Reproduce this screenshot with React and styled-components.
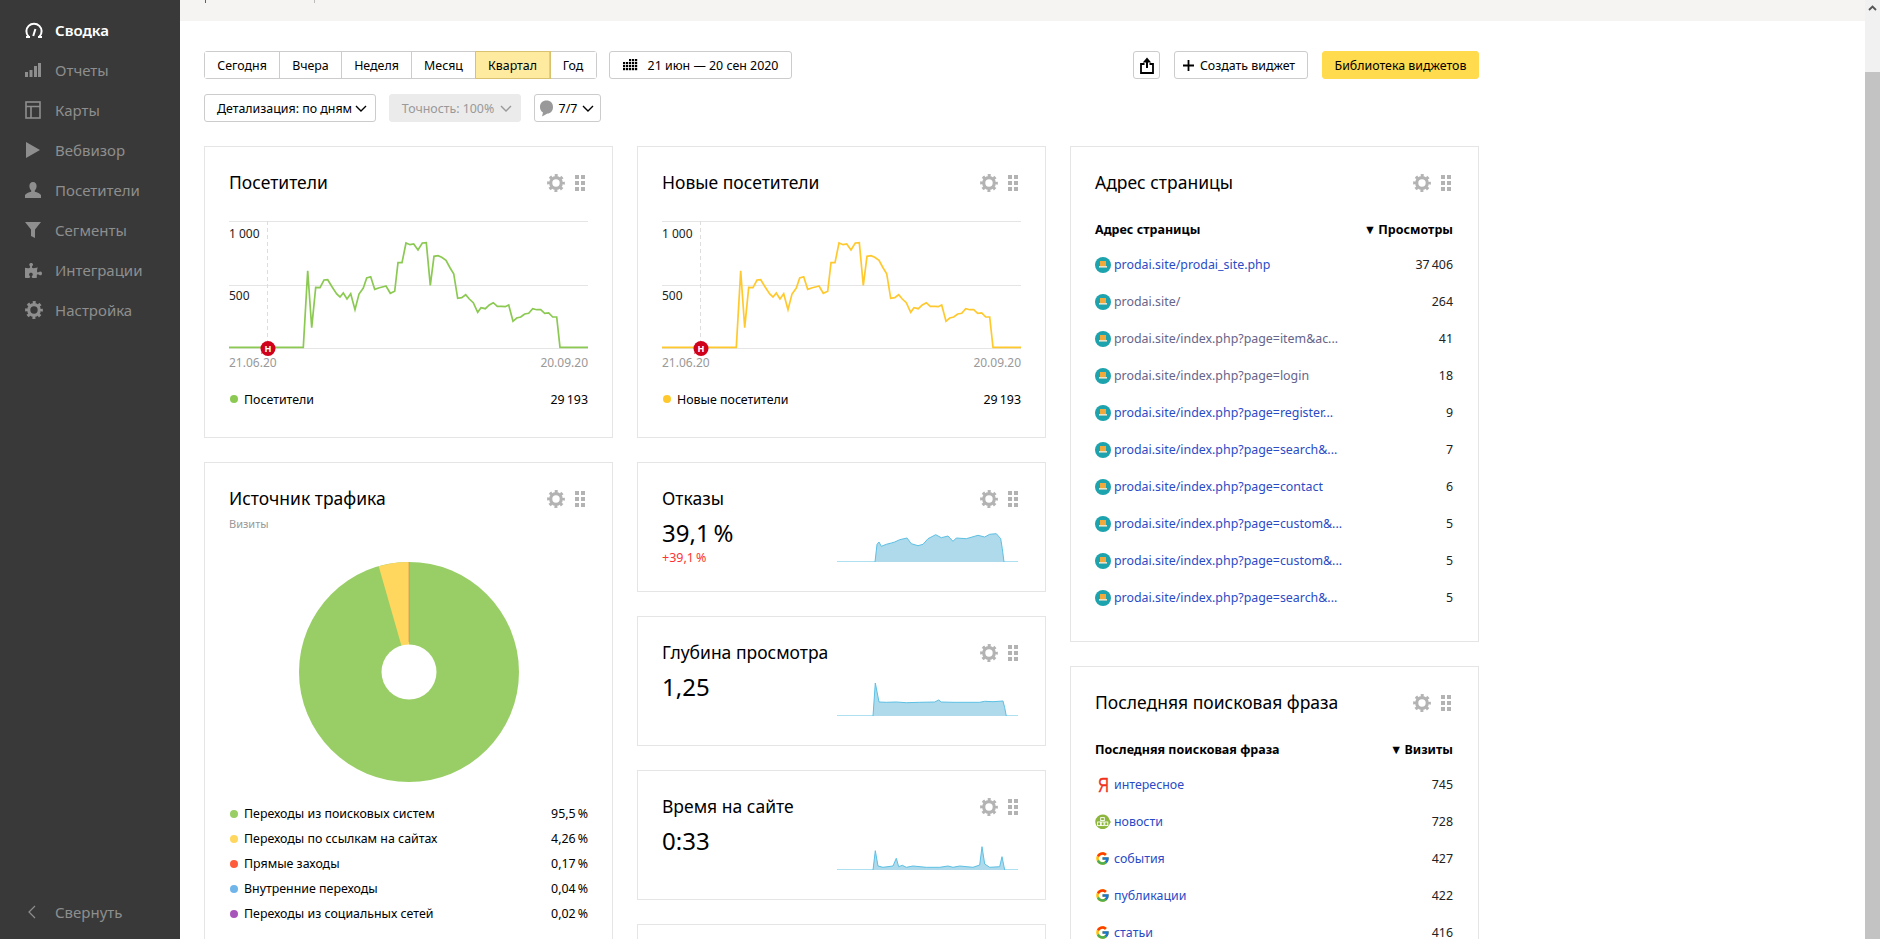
import React from "react";
import styled, { createGlobalStyle } from "styled-components";
import { FaPuzzlePiece } from "react-icons/fa";
import { FcGoogle } from "react-icons/fc";

const GlobalStyle = createGlobalStyle`
  html, body {
    margin: 0;
    height: 100%;
    overflow: hidden;
    background: #fff;
  }
  body {
    font-family: "Noto Sans", "Open Sans", "Liberation Sans", sans-serif;
    font-size: 12.4px;
    color: #000;
  }
  * { box-sizing: border-box; }
`;

const Page = styled.div`
  display: flex;
  width: 1880px;
  height: 939px;
  overflow: hidden;
`;

const Sidebar = styled.nav`
  width: 180px;
  flex-shrink: 0;
  background: #393939;
  display: flex;
  flex-direction: column;
  padding: 10px 0 7px;
`;

const NavItem = styled.div`
  height: 40px;
  display: flex;
  align-items: center;
  padding-left: 25px;
  font-size: 15px;
  font-weight: ${(p) => (p.$active ? 600 : 400)};
  color: ${(p) => (p.$active ? "#fff" : "#8e8e8e")};
`;

const NavIcon = styled.span`
  width: 30px;
  display: flex;
  align-items: center;
  color: ${(p) => (p.$active ? "#fff" : "#8e8e8e")};
`;

const Collapse = styled(NavItem)`
  margin-top: auto;
`;

const Main = styled.main`
  flex: 1;
  min-width: 0;
  overflow: hidden;
`;

const TopBar = styled.div`
  height: 21px;
  background: #f5f4f2;
  display: flex;
  align-items: flex-start;
  padding-left: 25px;
`;

const TopTick = styled.span`
  width: 1px;
  height: 3px;
  background: ${(p) => p.$color};
  margin-right: ${(p) => p.$gap}px;
`;

const Content = styled.div`
  padding: 30px 0 0 24px;
  width: 1299px;
`;

const ToolRow = styled.div`
  display: flex;
  justify-content: space-between;
  margin-bottom: ${(p) => p.$mb}px;
`;

const Group = styled.div`
  display: flex;
  gap: ${(p) => p.$gap}px;
`;

const Tabs = styled.div`
  display: flex;
  height: 28px;
  border: 1px solid #ccc;
  border-radius: 3px;
`;

const Tab = styled.div`
  width: ${(p) => p.$w}px;
  display: flex;
  align-items: center;
  justify-content: center;
  background: ${(p) => (p.$active ? "#ffeba0" : "#fff")};
  border-right: 1px solid #ccc;
  box-shadow: ${(p) => (p.$active ? "0 0 0 1px #d8c16f" : "none")};
  position: ${(p) => (p.$active ? "relative" : "static")};
  &:last-child { border-right: 0; }
`;

const Button = styled.div`
  height: 28px;
  width: ${(p) => p.$w}px;
  display: flex;
  align-items: center;
  justify-content: center;
  gap: ${(p) => p.$gap || 0}px;
  padding: 0 ${(p) => p.$pr || 0}px 0 ${(p) => p.$pl || 0}px;
  border: 1px solid #ccc;
  border-radius: 3px;
  background: #fff;
  white-space: nowrap;
`;

const MutedButton = styled(Button)`
  background: #ebebeb;
  border-color: #ebebeb;
  color: #999;
`;

const YellowButton = styled(Button)`
  background: #ffdb4d;
  border-color: #ffdb4d;
`;

const Columns = styled.div`
  display: grid;
  grid-template-columns: repeat(3, 409px);
  column-gap: 24px;
  align-items: start;
`;

const Column = styled.div`
  display: flex;
  flex-direction: column;
  gap: 24px;
`;

const Card = styled.section`
  height: ${(p) => p.$h}px;
  border: 1px solid #e5e5e5;
  padding: 23px 24px 0;
  flex-shrink: 0;
`;

const CardHead = styled.div`
  display: flex;
  align-items: center;
  justify-content: space-between;
  height: 26px;
  padding-right: 3px;
`;

const CardTitle = styled.h3`
  margin: 0;
  padding-bottom: 2px;
  font-size: 17.5px;
  font-weight: 400;
  line-height: 24px;
  white-space: nowrap;
`;

const CardTools = styled.div`
  display: flex;
  align-items: center;
  gap: 10px;
  color: #b3b3b3;
`;

const DotGrip = styled.svg`
  display: block;
`;

const Chart = styled.svg`
  display: block;
  margin-top: 25px;
  overflow: visible;
`;

const Dates = styled.div`
  display: flex;
  justify-content: space-between;
  font-size: 12px;
  line-height: 16px;
  color: #999;
  position: relative;
`;

const LegendRow = styled.div`
  display: flex;
  align-items: center;
  height: ${(p) => p.$h || 25}px;
  margin-top: ${(p) => p.$mt || 0}px;
`;

const LegendDot = styled.span`
  width: 8px;
  height: 8px;
  border-radius: 50%;
  margin: 0 6px 0 1px;
  background: ${(p) => p.$color};
  flex-shrink: 0;
`;

const LegendValue = styled.span`
  margin-left: auto;
`;

const Subtitle = styled.div`
  margin-top: 5px;
  font-size: 11px;
  line-height: 14px;
  color: #999;
`;

const Pie = styled.svg`
  display: block;
  margin: 31px auto 19px;
`;

const MetricBody = styled.div`
  display: flex;
  justify-content: space-between;
  padding-right: 3px;
`;

const MetricValue = styled.div`
  margin-top: 6px;
  font-size: 24px;
  line-height: 30px;
`;

const MetricDelta = styled.div`
  margin-top: 2px;
  font-size: 12.5px;
  line-height: 16px;
  color: #f33;
`;

const Spark = styled.svg`
  display: block;
  margin-top: 15px;
`;

const TableHead = styled.div`
  display: flex;
  justify-content: space-between;
  margin: 25px 0 7px;
  padding-right: 1px;
  font-weight: 700;
  font-size: 12.5px;
  line-height: 18px;
`;

const TableRow = styled.div`
  display: flex;
  align-items: center;
  height: 37px;
  padding-right: 1px;
`;

const RowIcon = styled.span`
  width: 19px;
  height: 16px;
  display: flex;
  align-items: center;
  flex-shrink: 0;
`;

const RowLink = styled.span`
  color: ${(p) => (p.$visited ? "#66648a" : "#2a4bc6")};
  white-space: nowrap;
`;

const RowValue = styled.span`
  margin-left: auto;
  color: #222;
`;

const YandexMark = styled.span`
  font-family: "Liberation Sans", sans-serif;
  font-size: 21px;
  line-height: 16px;
  color: #f0301f;
  -webkit-text-stroke: 0.3px #f0301f;
  margin-left: 3px;
  transform: scaleX(0.72);
  transform-origin: left center;
`;

const Scrollbar = styled.div`
  width: 15px;
  flex-shrink: 0;
  background: #f1f1f1;
  display: flex;
  flex-direction: column;
`;

const ScrollArrow = styled.div`
  height: 72px;
  padding-top: 5px;
  display: flex;
  justify-content: center;
  align-items: flex-start;
`;

const ScrollThumb = styled.div`
  flex: 1;
  background: #c3c3c3;
`;

const GaugeIcon = () => (
  <svg width="18" height="16" viewBox="0 0 18 16" fill="none" stroke="currentColor">
    <path d="M3.5 14.5A7.6 7.6 0 1 1 14.5 14.5" strokeWidth="2" />
    <path d="M1 15h4M13 15h4" strokeWidth="2" />
    <path d="M8.2 14l2.2-7" strokeWidth="2" />
  </svg>
);

const BarsIcon = () => (
  <svg width="16" height="16" viewBox="0 0 16 16" fill="currentColor">
    <rect x="0" y="10" width="3" height="5" />
    <rect x="4.5" y="8" width="3" height="7" />
    <rect x="9" y="4" width="3" height="11" />
    <rect x="13" y="1" width="3" height="14" />
  </svg>
);

const MapIcon = () => (
  <svg width="16" height="18" viewBox="0 0 16 18" fill="none" stroke="currentColor" strokeWidth="1.6">
    <rect x="1" y="1" width="14" height="16" />
    <path d="M1 5.5h14M6 5.5V17" />
  </svg>
);

const PlayIcon = () => (
  <svg width="16" height="16" viewBox="0 0 16 16" fill="currentColor">
    <path d="M1 0l14 8L1 16z" />
  </svg>
);

const UserIcon = () => (
  <svg width="16" height="16" viewBox="0 0 16 16" fill="currentColor">
    <path d="M8 0c2.4 0 3.6 1.700 3.600 4 0 2-1 3.600-1.800 4.600v1.200c2.600.8 5.200 1.600 6.200 3.200v3H0v-3c1-1.600 3.600-2.400 6.200-3.200V8.600C5.400 7.600 4.400 6 4.400 4 4.400 1.700 5.600 0 8 0z" />
  </svg>
);

const FunnelIcon = () => (
  <svg width="16" height="16" viewBox="0 0 16 16" fill="currentColor">
    <path d="M0 0h16l-6 7.500V16l-4-2V7.500z" />
  </svg>
);

// ring plus a dashed ring for the teeth, the hole stays wide like in the original
const GearIcon = () => (
  <svg width="18" height="18" viewBox="0 0 18 18" fill="none" stroke="currentColor">
    <circle cx="9" cy="9" r="5.300" strokeWidth="3.200" />
    <circle cx="9" cy="9" r="7.400" strokeWidth="3" strokeDasharray="2.900 2.912" strokeDashoffset="1.450" />
  </svg>
);

const Chevron = ({ color = "#000" }) => (
  <svg width="12" height="7" viewBox="0 0 12 7" fill="none" stroke={color} strokeWidth="1.4">
    <path d="M1 1l5 5 5-5" />
  </svg>
);

const CalendarIcon = () => (
  <svg width="15" height="12" viewBox="0 0 15 12" fill="#000">
    {[0, 1, 2, 3].flatMap((row) =>
      [0, 1, 2, 3, 4].map((col) =>
        row === 0 && col < 2 ? null : (
          <rect key={`${row}-${col}`} x={col * 3} y={row * 3} width="2.200" height="2.200" />
        )
      )
    )}
  </svg>
);

const CommentIcon = () => (
  <svg width="15" height="17" viewBox="0 0 15 17" fill="#999">
    <path d="M7.500 0.500C11.500 0.500 14 3 14 7c0 4-2.500 6.500-5.500 6.500L3 16.500l1-4C1.800 11.200 1 9.300 1 7 1 3 3.500 0.500 7.500 0.500z" />
  </svg>
);

const ShareIcon = () => (
  <svg width="14" height="17" viewBox="0 0 14 17" fill="none" stroke="#000">
    <path d="M7 11V2" strokeWidth="2" />
    <path d="M2.800 5.500L7 0.600l4.200 4.900z" fill="#000" strokeWidth="0" />
    <path d="M4.500 7H1v9h12V7H9.500" strokeWidth="1.800" />
  </svg>
);

const PlusIcon = () => (
  <svg width="11" height="11" viewBox="0 0 11 11" stroke="#000" strokeWidth="1.800">
    <path d="M5.500 0v11M0 5.500h11" />
  </svg>
);

const Grip = () => (
  <DotGrip width="10" height="16" viewBox="0 0 10 16" fill="#b3b3b3">
    {[0, 6, 12].flatMap((y) =>
      [0, 6].map((x) => <rect key={`${x}-${y}`} x={x} y={y} width="4" height="4" />)
    )}
  </DotGrip>
);

const Favicon = () => (
  <svg width="16" height="16" viewBox="0 0 16 16">
    <circle cx="8" cy="8" r="8" fill="#1da3ad" />
    <rect x="5" y="4" width="6" height="5" fill="#f2a93b" />
    <rect x="4" y="9" width="8" height="1.600" fill="#e9e2c8" />
  </svg>
);

const NewsIcon = () => (
  <svg width="16" height="16" viewBox="0 0 16 16" fill="none">
    <path d="M7.500 0.500a7.300 7.300 0 0 1 6.900 5l1.400 2.400-1.400 2.500a7.300 7.300 0 1 1-6.900-9.900z" fill="#8cb63c" />
    <rect x="5.700" y="3.600" width="3.600" height="3" stroke="#fff" strokeWidth="0.900" />
    <rect x="2.600" y="8" width="3" height="3.600" stroke="#fff" strokeWidth="0.900" />
    <rect x="6.200" y="8" width="2.800" height="3.600" stroke="#fff" strokeWidth="0.900" />
    <rect x="9.800" y="8" width="3" height="3.600" stroke="#fff" strokeWidth="0.900" />
  </svg>
);

const CardHeader = ({ title }) => (
  <CardHead>
    <CardTitle>{title}</CardTitle>
    <CardTools>
      <GearIcon />
      <Grip />
    </CardTools>
  </CardHead>
);

// traced from the visits graph, in 3x crop coordinates
const linePoints = [
  [27, 442], [250, 442], [263, 212], [275, 383], [287, 262], [300, 263], [312, 240], [323, 239],
  [337, 262], [350, 282], [360, 291], [370, 279], [381, 297], [392, 281], [405, 329], [417, 282],
  [430, 264], [440, 234], [452, 230], [464, 268], [478, 263], [490, 260], [498, 258], [511, 280],
  [524, 274], [534, 188], [546, 188], [558, 129], [570, 134], [581, 132], [594, 150], [607, 129],
  [619, 128], [631, 256], [642, 169], [654, 167], [665, 172], [678, 181], [690, 203], [701, 221],
  [713, 295], [725, 293], [737, 284], [748, 297], [760, 308], [773, 337], [783, 323], [796, 326],
  [808, 315], [820, 308], [832, 319], [845, 319], [856, 320], [866, 315], [879, 364], [890, 354],
  [902, 351], [914, 342], [926, 340], [938, 326], [950, 329], [962, 329], [974, 340], [986, 339],
  [998, 351], [1010, 351], [1020, 442], [1104, 442],
]
  .map(([x, y]) => `${(x / 3 - 9).toFixed(1)},${(y / 3 - 21).toFixed(1)}`)
  .join(" ");

const LineChart = ({ color }) => (
  <Chart width="359" height="134" viewBox="0 0 359 134">
    <path d="M0 0.500H359M0 64.500H359M0 127.500H359" stroke="#e5e5e5" />
    <path d="M38.500 0V120" stroke="#ddd" strokeDasharray="4 3" />
    <text x="0" y="17" fontSize="12" fill="#222">1 000</text>
    <text x="0" y="79" fontSize="12" fill="#222">500</text>
    <polyline points={linePoints} fill="none" stroke={color} strokeWidth="1.700" />
    <path d="M32 133l1.500-4h5z" fill="#d0021b" />
    <circle cx="39" cy="127.500" r="7.500" fill="#d0021b" />
    <text x="39" y="131" fontSize="9" fontWeight="700" fill="#fff" textAnchor="middle">Н</text>
  </Chart>
);

const sparkFill = (heights) => {
  const pts = heights.map(([x, h]) => `${((x - 652) / 3).toFixed(1)},${(35 - h / 3).toFixed(1)}`);
  return pts.join(" ");
};

const Sparkline = ({ heights }) => {
  const pts = sparkFill(heights);
  return (
    <Spark width="181" height="35" viewBox="0 0 181 35">
      <polygon points={pts} fill="#aedaeb" />
      <polyline points={pts} fill="none" stroke="#5cc0e4" strokeWidth="1" />
    </Spark>
  );
};

const bounceHeights = [
  [652, 0], [766, 0], [772, 53], [778, 60], [785, 47], [800, 53], [815, 57], [825, 60], [840, 67],
  [862, 72], [875, 55], [895, 49], [910, 53], [925, 70], [948, 82], [965, 73], [985, 78], [1000, 62],
  [1010, 72], [1040, 70], [1075, 80], [1095, 75], [1110, 83], [1130, 85], [1143, 70], [1148, 40],
  [1153, 0], [1195, 0],
];

const depthHeights = [
  [652, 0], [760, 0], [767, 99], [778, 42], [800, 41], [830, 42], [860, 40], [900, 41], [945, 42],
  [957, 48], [965, 42], [1000, 41], [1060, 41], [1080, 41], [1095, 44], [1120, 43], [1150, 45],
  [1155, 25], [1160, 0], [1195, 0],
];

const timeHeights = [
  [652, 0], [760, 0], [767, 58], [775, 12], [790, 8], [820, 12], [830, 35], [837, 10], [848, 14],
  [860, 8], [880, 12], [920, 8], [960, 8], [985, 12], [1000, 8], [1020, 12], [1060, 8], [1080, 15],
  [1087, 70], [1095, 18], [1110, 8], [1140, 10], [1147, 40], [1155, 0], [1195, 0],
];

const navItems = [
  { label: "Сводка", icon: <GaugeIcon />, active: true },
  { label: "Отчеты", icon: <BarsIcon /> },
  { label: "Карты", icon: <MapIcon /> },
  { label: "Вебвизор", icon: <PlayIcon /> },
  { label: "Посетители", icon: <UserIcon /> },
  { label: "Сегменты", icon: <FunnelIcon /> },
  { label: "Интеграции", icon: <FaPuzzlePiece size={17} /> },
  { label: "Настройка", icon: <GearIcon /> },
];

const tabs = [
  ["Сегодня", 75],
  ["Вчера", 62],
  ["Неделя", 70],
  ["Месяц", 64],
  ["Квартал", 74],
  ["Год", 46],
];

const sources = [
  ["Переходы из поисковых систем", "#98ce64", "95,5\u2009%"],
  ["Переходы по ссылкам на сайтах", "#ffd75e", "4,26\u2009%"],
  ["Прямые заходы", "#ff5c3c", "0,17\u2009%"],
  ["Внутренние переходы", "#6fb5e9", "0,04\u2009%"],
  ["Переходы из социальных сетей", "#a855bb", "0,02\u2009%"],
];

const pages = [
  ["prodai.site/prodai_site.php", "37\u2009406"],
  ["prodai.site/", "264", true],
  ["prodai.site/index.php?page=item&ac...", "41", true],
  ["prodai.site/index.php?page=login", "18", true],
  ["prodai.site/index.php?page=register...", "9"],
  ["prodai.site/index.php?page=search&...", "7"],
  ["prodai.site/index.php?page=contact", "6"],
  ["prodai.site/index.php?page=custom&...", "5"],
  ["prodai.site/index.php?page=custom&...", "5"],
  ["prodai.site/index.php?page=search&...", "5"],
];

const phrases = [
  ["интересное", "745", <YandexMark key="y">Я</YandexMark>],
  ["новости", "728", <NewsIcon key="n" />],
  ["события", "427", <FcGoogle key="g1" size={15} />],
  ["публикации", "422", <FcGoogle key="g2" size={15} />],
  ["статьи", "416", <FcGoogle key="g3" size={15} />],
];

export default function App() {
  return (
    <Page>
      <GlobalStyle />
      <Sidebar>
        {navItems.map((item) => (
          <NavItem key={item.label} $active={item.active}>
            <NavIcon $active={item.active}>{item.icon}</NavIcon>
            {item.label}
          </NavItem>
        ))}
        <Collapse>
          <NavIcon>
            <svg width="16" height="14" viewBox="0 0 16 14" fill="none" stroke="#8e8e8e" strokeWidth="1.200">
              <path d="M10 1L4 7l6 6" />
            </svg>
          </NavIcon>
          Свернуть
        </Collapse>
      </Sidebar>

      <Main>
        <TopBar>
          <TopTick $color="#3a6d7a" $gap={108} />
          <TopTick $color="#bbb" $gap={0} />
        </TopBar>
        <Content>
          <ToolRow $mb={15}>
            <Group $gap={12}>
              <Tabs>
                {tabs.map(([label, w]) => (
                  <Tab key={label} $w={w} $active={label === "Квартал"}>
                    {label}
                  </Tab>
                ))}
              </Tabs>
              <Button $w={183} $gap={10}>
                <CalendarIcon />
                21 июн — 20 сен 2020
              </Button>
            </Group>
            <Group $gap={14}>
              <Button $w={27}>
                <ShareIcon />
              </Button>
              <Button $w={134} $gap={6} $pr={4}>
                <PlusIcon />
                Создать виджет
              </Button>
              <YellowButton $w={157}>Библиотека виджетов</YellowButton>
            </Group>
          </ToolRow>
          <ToolRow $mb={24}>
            <Group $gap={13}>
              <Button $w={172} $gap={3} $pl={4}>
                Детализация: по дням
                <Chevron />
              </Button>
              <MutedButton $w={132} $gap={6} $pl={4}>
                Точность: 100%
                <Chevron color="#999" />
              </MutedButton>
              <Button $w={67} $gap={5} $pr={2}>
                <CommentIcon />
                7/7
                <Chevron />
              </Button>
            </Group>
          </ToolRow>

          <Columns>
            <Column>
              <Card $h={292}>
                <CardHeader title="Посетители" />
                <LineChart color="#8bc952" />
                <Dates>
                  <span>21.06.20</span>
                  <span>20.09.20</span>
                </Dates>
                <LegendRow $h={18} $mt={19}>
                  <LegendDot $color="#8bc952" />
                  Посетители
                  <LegendValue>29{"\u2009"}193</LegendValue>
                </LegendRow>
              </Card>
              <Card $h={500}>
                <CardHeader title="Источник трафика" />
                <Subtitle>Визиты</Subtitle>
                <Pie width="220" height="220" viewBox="0 0 220 220">
                  <circle cx="110" cy="110" r="110" fill="#99ce66" />
                  <path d="M110 110L110 0A110 110 0 0 0 79.700 4.300z" fill="#ffd75e" />
                  <path d="M110 80V0" stroke="#c9875a" strokeWidth="0.600" />
                  <circle cx="110" cy="110" r="27.500" fill="#fff" />
                </Pie>
                {sources.map(([label, color, value]) => (
                  <LegendRow key={label}>
                    <LegendDot $color={color} />
                    {label}
                    <LegendValue>{value}</LegendValue>
                  </LegendRow>
                ))}
              </Card>
            </Column>

            <Column>
              <Card $h={292}>
                <CardHeader title="Новые посетители" />
                <LineChart color="#ffc92e" />
                <Dates>
                  <span>21.06.20</span>
                  <span>20.09.20</span>
                </Dates>
                <LegendRow $h={18} $mt={19}>
                  <LegendDot $color="#ffc92e" />
                  Новые посетители
                  <LegendValue>29{"\u2009"}193</LegendValue>
                </LegendRow>
              </Card>
              <Card $h={130}>
                <CardHeader title="Отказы" />
                <MetricBody>
                  <div>
                    <MetricValue>39,1{"\u2009"}%</MetricValue>
                    <MetricDelta>+39,1{"\u2009"}%</MetricDelta>
                  </div>
                  <Sparkline heights={bounceHeights} />
                </MetricBody>
              </Card>
              <Card $h={130}>
                <CardHeader title="Глубина просмотра" />
                <MetricBody>
                  <MetricValue>1,25</MetricValue>
                  <Sparkline heights={depthHeights} />
                </MetricBody>
              </Card>
              <Card $h={130}>
                <CardHeader title="Время на сайте" />
                <MetricBody>
                  <MetricValue>0:33</MetricValue>
                  <Sparkline heights={timeHeights} />
                </MetricBody>
              </Card>
              <Card $h={130} />
            </Column>

            <Column>
              <Card $h={496}>
                <CardHeader title="Адрес страницы" />
                <TableHead>
                  <span>Адрес страницы</span>
                  <span>▼{"\u2009"}Просмотры</span>
                </TableHead>
                {pages.map(([url, views, visited], i) => (
                  <TableRow key={i}>
                    <RowIcon>
                      <Favicon />
                    </RowIcon>
                    <RowLink $visited={visited}>{url}</RowLink>
                    <RowValue>{views}</RowValue>
                  </TableRow>
                ))}
              </Card>
              <Card $h={400}>
                <CardHeader title="Последняя поисковая фраза" />
                <TableHead>
                  <span>Последняя поисковая фраза</span>
                  <span>▼{"\u2009"}Визиты</span>
                </TableHead>
                {phrases.map(([phrase, visits, icon]) => (
                  <TableRow key={phrase}>
                    <RowIcon>{icon}</RowIcon>
                    <RowLink>{phrase}</RowLink>
                    <RowValue>{visits}</RowValue>
                  </TableRow>
                ))}
              </Card>
            </Column>
          </Columns>
        </Content>
      </Main>

      <Scrollbar>
        <ScrollArrow>
          <svg width="9" height="6" viewBox="0 0 9 6" fill="none" stroke="#555" strokeWidth="1.800">
            <path d="M1 5l3.500-3.500L8 5" />
          </svg>
        </ScrollArrow>
        <ScrollThumb />
      </Scrollbar>
    </Page>
  );
}
